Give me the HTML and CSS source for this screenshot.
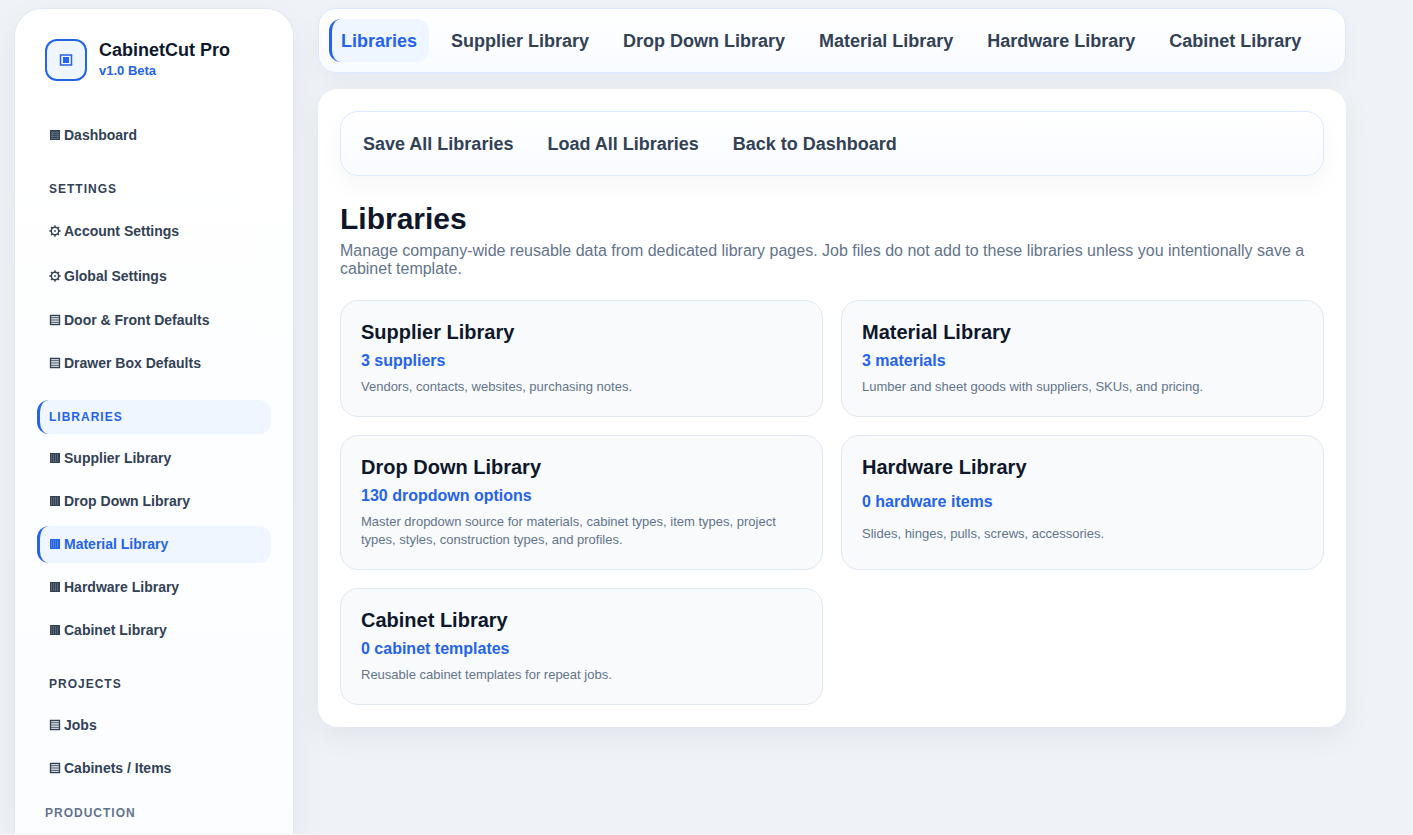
FILE: index.html
```html
<!DOCTYPE html>
<html lang="en">
<head>
  <meta charset="UTF-8">
  <meta name="viewport" content="width=device-width, initial-scale=1.0">
  <title>CabinetCut Pro</title>
  <link rel="stylesheet" href="styles.css">
</head>
<body>
  <!-- shared icons -->
  <svg class="sprite" aria-hidden="true">
    <symbol id="icon-grid" viewBox="0 0 12 12">
      <rect x="1" y="1" width="10" height="10" fill="currentColor"/>
      <path d="M2 3.5h8M2 5.5h8M2 7.5h8M2 9.5h8M3.5 2v8M8.5 2v8" stroke="#fff" stroke-width="1" opacity=".2"/>
    </symbol>
    <symbol id="icon-gear" viewBox="0 0 12 12">
      <circle cx="6" cy="6" r="3.7" fill="none" stroke="currentColor" stroke-width="1.5"/>
      <circle cx="6" cy="6" r=".9" fill="currentColor"/>
      <path d="M6 .3v2M6 9.7v2M.3 6h2M9.7 6h2M2 2l1.3 1.3M8.7 8.7L10 10M2 10l1.3-1.3M8.7 3.3L10 2" stroke="currentColor" stroke-width="1.4"/>
    </symbol>
    <symbol id="icon-rows" viewBox="0 0 12 12">
      <path d="M1.5 1.5h9v9h-9z" fill="none" stroke="currentColor" stroke-width="1.3"/>
      <path d="M2 3.8h8M2 6h8M2 8.2h8" stroke="currentColor" stroke-width="1.1"/>
    </symbol>
    <symbol id="icon-columns" viewBox="0 0 12 12">
      <rect x="1" y="1" width="10" height="10" fill="currentColor"/>
      <path d="M2.5 2v8M4.5 2v8M6.5 2v8M8.5 2v8" stroke="#fff" stroke-width="1" opacity=".2"/>
    </symbol>
  </svg>

  <div class="layout">
    <aside class="sidebar">
      <div class="brand">
        <div class="logo">
          <svg width="14" height="12" viewBox="0 0 14 12" aria-hidden="true">
            <path d="M1.5 1h11v10h-11z" fill="none" stroke="currentColor" stroke-width="1.5"/>
            <rect x="4" y="3" width="6" height="6" fill="currentColor"/>
          </svg>
        </div>
        <div>
          <div class="brand-name">CabinetCut Pro</div>
          <div class="brand-version">v1.0 Beta</div>
        </div>
      </div>

      <nav class="side-nav">
        <a class="side-link" href="#"><svg class="icon"><use href="#icon-grid"/></svg>Dashboard</a>

        <a class="side-heading" href="#">SETTINGS</a>
        <a class="side-link tall" href="#"><svg class="icon"><use href="#icon-gear"/></svg>Account Settings</a>
        <a class="side-link tall" href="#"><svg class="icon"><use href="#icon-gear"/></svg>Global Settings</a>
        <a class="side-link" href="#"><svg class="icon"><use href="#icon-rows"/></svg>Door &amp; Front Defaults</a>
        <a class="side-link" href="#"><svg class="icon"><use href="#icon-rows"/></svg>Drawer Box Defaults</a>

        <a class="side-heading active" href="#">LIBRARIES</a>
        <a class="side-link" href="#"><svg class="icon"><use href="#icon-columns"/></svg>Supplier Library</a>
        <a class="side-link" href="#"><svg class="icon"><use href="#icon-columns"/></svg>Drop Down Library</a>
        <a class="side-link active" href="#"><svg class="icon"><use href="#icon-columns"/></svg>Material Library</a>
        <a class="side-link" href="#"><svg class="icon"><use href="#icon-columns"/></svg>Hardware Library</a>
        <a class="side-link" href="#"><svg class="icon"><use href="#icon-columns"/></svg>Cabinet Library</a>

        <a class="side-heading" href="#">PROJECTS</a>
        <a class="side-link" href="#"><svg class="icon"><use href="#icon-rows"/></svg>Jobs</a>
        <a class="side-link" href="#"><svg class="icon"><use href="#icon-rows"/></svg>Cabinets / Items</a>

        <div class="side-label">PRODUCTION</div>
      </nav>
    </aside>

    <main class="main">
      <nav class="bar">
        <button class="bar-button active" type="button">Libraries</button>
        <button class="bar-button" type="button">Supplier Library</button>
        <button class="bar-button" type="button">Drop Down Library</button>
        <button class="bar-button" type="button">Material Library</button>
        <button class="bar-button" type="button">Hardware Library</button>
        <button class="bar-button" type="button">Cabinet Library</button>
      </nav>

      <section class="panel">
        <div class="bar">
          <button class="bar-button" type="button">Save All Libraries</button>
          <button class="bar-button" type="button">Load All Libraries</button>
          <button class="bar-button" type="button">Back to Dashboard</button>
        </div>

        <h1 class="title">Libraries</h1>
        <p class="subtitle">Manage company-wide reusable data from dedicated library pages. Job files do not add to these libraries unless you intentionally save a cabinet template.</p>

        <div class="cards">
          <a class="card" href="#">
            <h2 class="card-title">Supplier Library</h2>
            <strong class="card-count">3 suppliers</strong>
            <span class="card-text">Vendors, contacts, websites, purchasing notes.</span>
          </a>
          <a class="card" href="#">
            <h2 class="card-title">Material Library</h2>
            <strong class="card-count">3 materials</strong>
            <span class="card-text">Lumber and sheet goods with suppliers, SKUs, and pricing.</span>
          </a>
          <a class="card" href="#">
            <h2 class="card-title">Drop Down Library</h2>
            <strong class="card-count">130 dropdown options</strong>
            <span class="card-text">Master dropdown source for materials, cabinet types, item types, project types, styles, construction types, and profiles.</span>
          </a>
          <a class="card" href="#">
            <h2 class="card-title">Hardware Library</h2>
            <strong class="card-count">0 hardware items</strong>
            <span class="card-text">Slides, hinges, pulls, screws, accessories.</span>
          </a>
          <a class="card" href="#">
            <h2 class="card-title">Cabinet Library</h2>
            <strong class="card-count">0 cabinet templates</strong>
            <span class="card-text">Reusable cabinet templates for repeat jobs.</span>
          </a>
        </div>
      </section>
    </main>
  </div>
</body>
</html>
```
FILE: styles.css
```css
* {
  box-sizing: border-box;
}

body {
  margin: 0;
  font-family: "Liberation Sans", Arial, sans-serif;
  background: #eff3f8;
  color: #0f172a;
}

a {
  color: inherit;
  text-decoration: none;
}

.sprite {
  display: none;
}

.layout {
  display: flex;
  gap: 24px;
  height: 100vh;
  padding: 8px 67px 0 14px;
  border-bottom: 1px solid #f3f4f6;
  overflow: hidden;
}

/* Sidebar */

.sidebar {
  flex: 0 0 280px;
  padding: 22px;
  border: 1px solid #e2e8f0;
  border-bottom: none;
  border-radius: 28px 28px 0 0;
  background: linear-gradient(180deg, #ffffff, #fbfdff);
  box-shadow: 0 14px 36px rgba(15, 23, 42, 0.06);
  overflow: hidden;
}

.brand {
  display: flex;
  align-items: center;
  gap: 12px;
  padding: 8px 8px 36px;
}

.logo {
  display: flex;
  align-items: center;
  justify-content: center;
  width: 42px;
  height: 42px;
  border: 2px solid #2563eb;
  border-radius: 12px;
  background: #eff6ff;
  color: #2563eb;
}

.brand-name {
  font-size: 18px;
  line-height: 22px;
  font-weight: bold;
}

.brand-version {
  font-size: 13px;
  line-height: 20px;
  font-weight: bold;
  color: #2563eb;
}

.side-nav {
  display: flex;
  flex-direction: column;
  gap: 6px;
}

.side-link,
.side-heading {
  display: flex;
  align-items: center;
  gap: 3px;
  padding: 0 12px 0 9px;
  border-left: 3px solid transparent;
  border-radius: 12px;
  font-weight: bold;
  color: #334155;
}

.side-link {
  height: 37px;
  padding-bottom: 1px;
  font-size: 14px;
}

.side-link.tall {
  height: 39px;
}

.side-heading {
  height: 34px;
  margin-top: 12px;
  font-size: 12px;
  letter-spacing: 1px;
}

.side-link.active,
.side-heading.active {
  border-left-color: #2563eb;
  background: #eff6ff;
  color: #2563eb;
}

.side-label {
  padding: 12px 8px 0;
  font-size: 12px;
  line-height: 16px;
  font-weight: 900;
  letter-spacing: 1px;
  color: #64748b;
}

.icon {
  width: 12px;
  height: 12px;
}

/* Main column */

.main {
  flex: 1;
  min-width: 0;
}

.bar {
  display: flex;
  gap: 10px;
  padding: 10px;
  border: 1px solid #dbeafe;
  border-radius: 18px;
  background: linear-gradient(180deg, #ffffff, #f8fbff);
  box-shadow: 0 10px 24px rgba(15, 23, 42, 0.04);
}

.bar-button {
  height: 43px;
  padding: 2px 12px 0 9px;
  border: none;
  border-left: 3px solid transparent;
  border-radius: 12px;
  background: none;
  font-family: inherit;
  font-size: 18px;
  font-weight: 900;
  color: #334155;
  white-space: nowrap;
  cursor: pointer;
}

.bar-button.active {
  border-left-color: #2563eb;
  background: #eff6ff;
  color: #2563eb;
}

.panel {
  margin-top: 16px;
  padding: 22px;
  border-radius: 20px;
  background: #fff;
  box-shadow: 0 10px 30px rgba(15, 23, 42, 0.06);
}

.title {
  margin: 26px 0 6px;
  font-size: 30px;
  line-height: 34px;
}

.subtitle {
  margin: 0 0 22px;
  font-size: 16px;
  line-height: 18px;
  color: #64748b;
}

.cards {
  display: grid;
  grid-template-columns: 1fr 1fr;
  gap: 18px;
}

.card {
  display: grid;
  gap: 8px;
  padding: 20px;
  border: 1px solid #e2e8f0;
  border-radius: 18px;
  background: #f8fafc;
}

.card-title {
  margin: 0;
  font-size: 20px;
  line-height: 23px;
}

.card-count {
  font-size: 16px;
  line-height: 18px;
  color: #2563eb;
}

.card-text {
  font-size: 13px;
  line-height: 18px;
  color: #64748b;
}
```
